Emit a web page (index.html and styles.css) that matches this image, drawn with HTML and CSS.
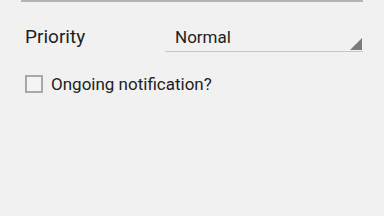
FILE: index.html
```html
<!DOCTYPE html>
<html>
<head>
<meta charset="utf-8">
<link rel="stylesheet" href="styles.css">
</head>
<body>
<div class="screen">
  <div class="top-field"></div>
  <div class="row priority-row">
    <div class="label">Priority</div>
    <div class="spinner">
      <span class="spinner-text">Normal</span>
      <span class="spinner-arrow"></span>
    </div>
  </div>
  <label class="check-row">
    <span class="checkbox"></span>
    <span class="check-text">Ongoing notification?</span>
  </label>
</div>
</body>
</html>
```
FILE: styles.css
```css
html, body {
  margin: 0;
  padding: 0;
  background: #f1f1f1;
}
.screen {
  width: 384px;
  height: 216px;
  background: #f1f1f1;
  font-family: Roboto, "Liberation Sans", sans-serif;
  color: #1e1e1e;
  overflow: hidden;
}
.top-field {
  margin: 0 21px;
  height: 2px;
  background: #b4b4b4;
}
.priority-row {
  display: flex;
  align-items: flex-start;
  margin-top: 23px;
  padding-left: 25px;
}
.label {
  width: 140px;
  font-size: 19px;
  line-height: 24px;
}
.spinner {
  position: relative;
  width: 198px;
  padding-left: 10px;
  box-sizing: border-box;
  border-bottom: 1px solid #c6c6c6;
  height: 27px;
}
.spinner-text {
  font-size: 17px;
  line-height: 24px;
}
.spinner-arrow {
  position: absolute;
  right: 1px;
  bottom: 1px;
  width: 0;
  height: 0;
  border-left: 12px solid transparent;
  border-bottom: 12px solid #7b7b7b;
}
.check-row {
  display: flex;
  align-items: center;
  gap: 8px;
  margin-top: 21px;
  padding-left: 25px;
}
.checkbox {
  width: 14px;
  height: 14px;
  border: 2px solid #a8a8a8;
  background: #f4f4f4;
}
.check-text {
  font-size: 17px;
  line-height: 22px;
  color: #222;
}
```
